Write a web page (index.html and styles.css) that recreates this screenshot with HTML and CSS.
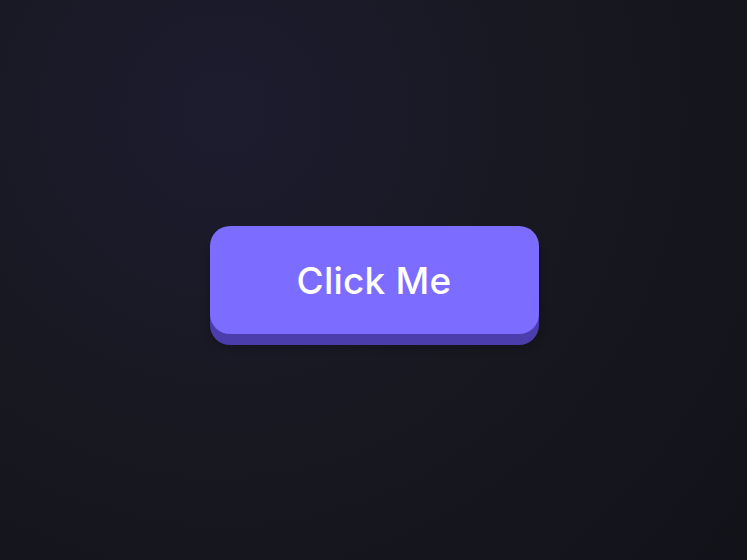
FILE: index.html
```html
<!DOCTYPE html>
<html lang="en">
<head>
    <meta charset="UTF-8">
    <meta name="viewport" content="width=device-width, initial-scale=1.0">
    <title>Click Me</title>
    <link rel="stylesheet" href="styles.css">
</head>
<body>
    <div id="app">
        <button class="btn">Click Me</button>
    </div>
</body>
</html>
```

FILE: styles.css
```css
html,
body {
    padding: 0;
    margin: 0;
}

#app {
    height: 100vh;
    display: flex;
    justify-content: center;
    align-items: center;
    padding-left: 1px;
    box-sizing: border-box;
    background: radial-gradient(circle at 30% 20%, #1d1c2f 0%, #17171f 55%, #121219 100%);
}

.btn {
    width: 329px;
    height: 108px;
    border: none;
    border-radius: 20px;
    background: #7c6cff;
    color: #fff;
    font-family: Inter, "Noto Sans", sans-serif;
    font-size: 37px;
    font-weight: 500;
    letter-spacing: 0.2px;
    cursor: pointer;
    box-shadow: 0 11px 0 #4b3dac, 0 12px 10px rgba(0, 0, 0, 0.3);
}
```
